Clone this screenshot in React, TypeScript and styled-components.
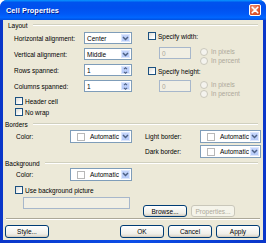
import styled, { createGlobalStyle } from 'styled-components';

const GlobalStyle = createGlobalStyle`
  html, body {
    margin: 0;
    padding: 0;
    background: #ffffff;
  }
  body {
    font-family: "Liberation Sans", Arial, sans-serif;
    font-size: 6.5px;
    color: #000;
  }
`;

const ChevronDown = () => (
  <svg width="7" height="5" viewBox="0 0 7 5">
    <path d="M1 1 L3.5 3.5 L6 1" fill="none" stroke="#4D6185" strokeWidth="1.5" />
  </svg>
);

const SpinArrows = () => (
  <svg width="5" height="9" viewBox="0 0 5 9">
    <path d="M1 3.2 L2.5 1.7 L4 3.2" fill="none" stroke="#4D6185" strokeWidth="1.1" />
    <path d="M1 5.8 L2.5 7.3 L4 5.8" fill="none" stroke="#4D6185" strokeWidth="1.1" />
  </svg>
);

const CloseX = () => (
  <svg width="8" height="8" viewBox="0 0 8 8">
    <path d="M1.2 1.2 L6.8 6.8 M6.8 1.2 L1.2 6.8" stroke="#fff" strokeWidth="1.6" strokeLinecap="round" />
  </svg>
);

const Dropdown = ({ value }: { value: string }) => (
  <SelectBox>
    <SelectText>{value}</SelectText>
    <ArrowButton>
      <ChevronDown />
    </ArrowButton>
  </SelectBox>
);

const Spinner = ({ value }: { value: string }) => (
  <SelectBox>
    <SelectText>{value}</SelectText>
    <ArrowButton>
      <SpinArrows />
    </ArrowButton>
  </SelectBox>
);

const ColorPicker = ({ wide }: { wide?: boolean }) => (
  <PickerBox $w={wide ? 62 : 61}>
    <Swatch />
    <SelectText>Automatic</SelectText>
    <ArrowButton>
      <ChevronDown />
    </ArrowButton>
  </PickerBox>
);

const Check = ({ label }: { label: string }) => (
  <CheckRow>
    <CheckBox />
    <span>{label}</span>
  </CheckRow>
);

const SizeGroup = ({ label, top }: { label: string; top: number }) => (
  <SizeBlock>
    <Check label={label} />
    <SizeRow $top={top}>
      <DisabledInput $w={32}>0</DisabledInput>
      <RadioList>
        <RadioRow>
          <RadioDot />
          In pixels
        </RadioRow>
        <RadioRow>
          <RadioDot />
          In percent
        </RadioRow>
      </RadioList>
    </SizeRow>
  </SizeBlock>
);

export default function App() {
  return (
    <>
      <GlobalStyle />
      <Window>
        <TitleBar>
          <Title>Cell Properties</Title>
          <CloseButton>
            <CloseX />
          </CloseButton>
        </TitleBar>
        <Frame>
          <Body>
            <GroupHeader $indent={5}>
              <span>Layout</span>
            </GroupHeader>
            <LayoutSection>
              <LeftColumn>
                <FieldGrid>
                  <span>Horizontal alignment:</span>
                  <Dropdown value="Center" />
                  <span>Vertical alignment:</span>
                  <Dropdown value="Middle" />
                  <span>Rows spanned:</span>
                  <Spinner value="1" />
                  <span>Columns spanned:</span>
                  <Spinner value="1" />
                </FieldGrid>
                <CheckList>
                  <Check label="Header cell" />
                  <Check label="No wrap" />
                </CheckList>
              </LeftColumn>
              <RightColumn>
                <SizeGroup label="Specify width:" top={7} />
                <SizeGroup label="Specify height:" top={5} />
              </RightColumn>
            </LayoutSection>

            <GroupHeader $indent={2} $top={3}>
              <span>Borders</span>
            </GroupHeader>
            <BordersSection>
              <PickerRow $labelWidth={54}>
                <span>Color:</span>
                <ColorPicker wide />
              </PickerRow>
              <BorderColumn>
                <PickerRow $labelWidth={55}>
                  <span>Light border:</span>
                  <ColorPicker />
                </PickerRow>
                <PickerRow $labelWidth={55}>
                  <span>Dark border:</span>
                  <ColorPicker />
                </PickerRow>
              </BorderColumn>
            </BordersSection>

            <GroupHeader $indent={2}>
              <span>Background</span>
            </GroupHeader>
            <BackgroundSection>
              <PickerRow $labelWidth={54}>
                <span>Color:</span>
                <ColorPicker wide />
              </PickerRow>
              <BgCheck>
                <Check label="Use background picture" />
              </BgCheck>
              <PictureRow>
                <DisabledInput $w={107} />
                <ButtonPair>
                  <Button>Browse...</Button>
                  <Button $disabled>Properties...</Button>
                </ButtonPair>
              </PictureRow>
            </BackgroundSection>

            <Separator />
            <ActionBar>
              <Button>Style...</Button>
              <ButtonGroup>
                <Button>OK</Button>
                <Button>Cancel</Button>
                <Button>Apply</Button>
              </ButtonGroup>
            </ActionBar>
          </Body>
        </Frame>
      </Window>
    </>
  );
}

const Window = styled.div`
  width: 266px;
  height: 243px;
  display: flex;
  flex-direction: column;
  border-radius: 7px 7px 0 0;
  overflow: hidden;
  background: #0840d6;
`;

const TitleBar = styled.div`
  height: 20px;
  flex: none;
  display: flex;
  align-items: center;
  justify-content: space-between;
  padding: 0 5px 0 6px;
  background: linear-gradient(
    180deg,
    #0997ff 0%,
    #0053ee 12%,
    #0050ee 40%,
    #0059f7 70%,
    #0066ff 88%,
    #0050e0 100%
  );
`;

const Title = styled.span`
  color: #fff;
  font-size: 7.3px;
  font-weight: bold;
  text-shadow: 1px 1px 0 #0a1d8a;
  letter-spacing: 0.1px;
`;

const CloseButton = styled.div`
  width: 12px;
  height: 12px;
  box-sizing: border-box;
  border: 1px solid #fff;
  border-radius: 2px;
  display: flex;
  align-items: center;
  justify-content: center;
  background: radial-gradient(circle at 35% 30%, #f0977a 0%, #e2552c 60%, #c1391a 100%);
`;

const Frame = styled.div`
  flex: 1;
  display: flex;
  padding: 0 3px 3px 3px;
  background: linear-gradient(90deg, #0a36c9, #0c4ee8 50%, #0a36c9);
`;

const Body = styled.div`
  flex: 1;
  display: flex;
  flex-direction: column;
  background: #ece9d8;
  padding: 0 0 2px 0;
`;

const GroupHeader = styled.div<{ $indent: number; $top?: number }>`
  height: 10px;
  flex: none;
  display: flex;
  align-items: center;
  gap: 5px;
  margin-top: ${({ $top }) => $top ?? 0}px;
  padding: 0 5px 0 ${({ $indent }) => $indent}px;
  &::after {
    content: '';
    flex: 1;
    height: 0;
    border-top: 1px solid #d0d0bf;
    border-bottom: 1px solid #fff;
  }
`;

const LayoutSection = styled.div`
  display: flex;
  margin-top: 2px;
  padding-left: 11px;
`;

const LeftColumn = styled.div`
  display: flex;
  flex-direction: column;
`;

const FieldGrid = styled.div`
  display: grid;
  grid-template-columns: 70px 48px;
  grid-auto-rows: 12px;
  row-gap: 4px;
  align-items: center;
`;

const SelectBox = styled.div`
  height: 12px;
  box-sizing: border-box;
  border: 1px solid #7f9db9;
  background: #fff;
  display: flex;
  align-items: center;
`;

const PickerBox = styled(SelectBox)<{ $w: number }>`
  width: ${({ $w }) => $w}px;
  height: 13px;
`;

const SelectText = styled.span`
  flex: 1;
  padding-left: 2px;
  white-space: nowrap;
`;

const ArrowButton = styled.div`
  width: 9px;
  align-self: stretch;
  margin: 1px;
  border-radius: 1px;
  display: flex;
  align-items: center;
  justify-content: center;
  background: linear-gradient(180deg, #c6d6fc 0%, #b3c8f7 100%);
  box-shadow: inset 0 0 0 1px #dde7fd;
`;

const Swatch = styled.div`
  width: 6px;
  height: 6px;
  margin: 0 3px 0 6px;
  border: 1px solid #b8b8b8;
  background: #fff;
`;

const CheckList = styled.div`
  display: flex;
  flex-direction: column;
  gap: 3px;
  margin: 5px 0 0 1px;
`;

const CheckRow = styled.div`
  height: 8px;
  display: flex;
  align-items: center;
  gap: 2px;
  white-space: nowrap;
`;

const CheckBox = styled.div`
  width: 8px;
  height: 8px;
  box-sizing: border-box;
  border: 1px solid #1c5180;
  background: linear-gradient(135deg, #dcdcd7 0%, #fff 80%);
`;

const RightColumn = styled.div`
  display: flex;
  flex-direction: column;
  gap: 2px;
  margin-left: 16px;
`;

const SizeBlock = styled.div`
  display: flex;
  flex-direction: column;
`;

const SizeRow = styled.div<{ $top: number }>`
  display: flex;
  margin: ${({ $top }) => $top}px 0 0 11px;
`;

const DisabledInput = styled.div<{ $w: number }>`
  width: ${({ $w }) => $w}px;
  height: 12px;
  box-sizing: border-box;
  border: 1px solid #a7b7cb;
  background: #f1efe4;
  color: #aca899;
  padding-left: 2px;
  display: flex;
  align-items: center;
`;

const RadioList = styled.div`
  display: flex;
  flex-direction: column;
  margin-left: 9px;
`;

const RadioRow = styled.div`
  height: 9px;
  display: flex;
  align-items: center;
  gap: 3px;
  color: #aca899;
  white-space: nowrap;
`;

const RadioDot = styled.div`
  width: 6px;
  height: 6px;
  border-radius: 50%;
  border: 1px solid #cac8bb;
  background: #f4f3ee;
`;

const BordersSection = styled.div`
  display: flex;
  align-items: flex-start;
  margin-top: 1px;
  padding-left: 13px;
`;

const PickerRow = styled.div<{ $labelWidth: number }>`
  display: flex;
  align-items: center;
  & > span {
    width: ${({ $labelWidth }) => $labelWidth}px;
  }
`;

const BorderColumn = styled.div`
  display: flex;
  flex-direction: column;
  gap: 2px;
  margin-left: 13px;
`;

const BackgroundSection = styled.div`
  display: flex;
  flex-direction: column;
  padding-left: 13px;
`;

const BgCheck = styled.div`
  margin: 5px 0 0 -1px;
`;

const PictureRow = styled.div`
  display: flex;
  height: 20px;
  margin: 3px 0 0 7px;
  & > :first-child {
    align-self: flex-start;
  }
`;

const ButtonPair = styled.div`
  display: flex;
  gap: 4px;
  align-self: flex-end;
  margin-left: 13px;
`;

const Button = styled.div<{ $disabled?: boolean }>`
  width: 44px;
  height: 12px;
  box-sizing: border-box;
  display: flex;
  align-items: center;
  justify-content: center;
  border: 1px solid ${({ $disabled }) => ($disabled ? '#c9c7ba' : '#003c74')};
  border-radius: 3px;
  color: ${({ $disabled }) => ($disabled ? '#aca899' : '#000')};
  background: ${({ $disabled }) =>
    $disabled ? '#f5f4ea' : 'linear-gradient(180deg, #ffffff 0%, #f0efe9 70%, #d9d4c8 100%)'};
  box-shadow: ${({ $disabled }) => ($disabled ? 'none' : 'inset 0 -1px 0 #d6d0c5')};
`;

const Separator = styled.div`
  height: 0;
  margin: 1px 3px 0 3px;
  border-top: 1px solid #aca899;
  border-bottom: 1px solid #fff;
`;

const ActionBar = styled.div`
  display: flex;
  justify-content: space-between;
  margin-top: 5px;
  padding: 0 3px 0 2px;
  & ${Button} {
    height: 13px;
  }
`;

const ButtonGroup = styled.div`
  display: flex;
  gap: 4px;
`;
